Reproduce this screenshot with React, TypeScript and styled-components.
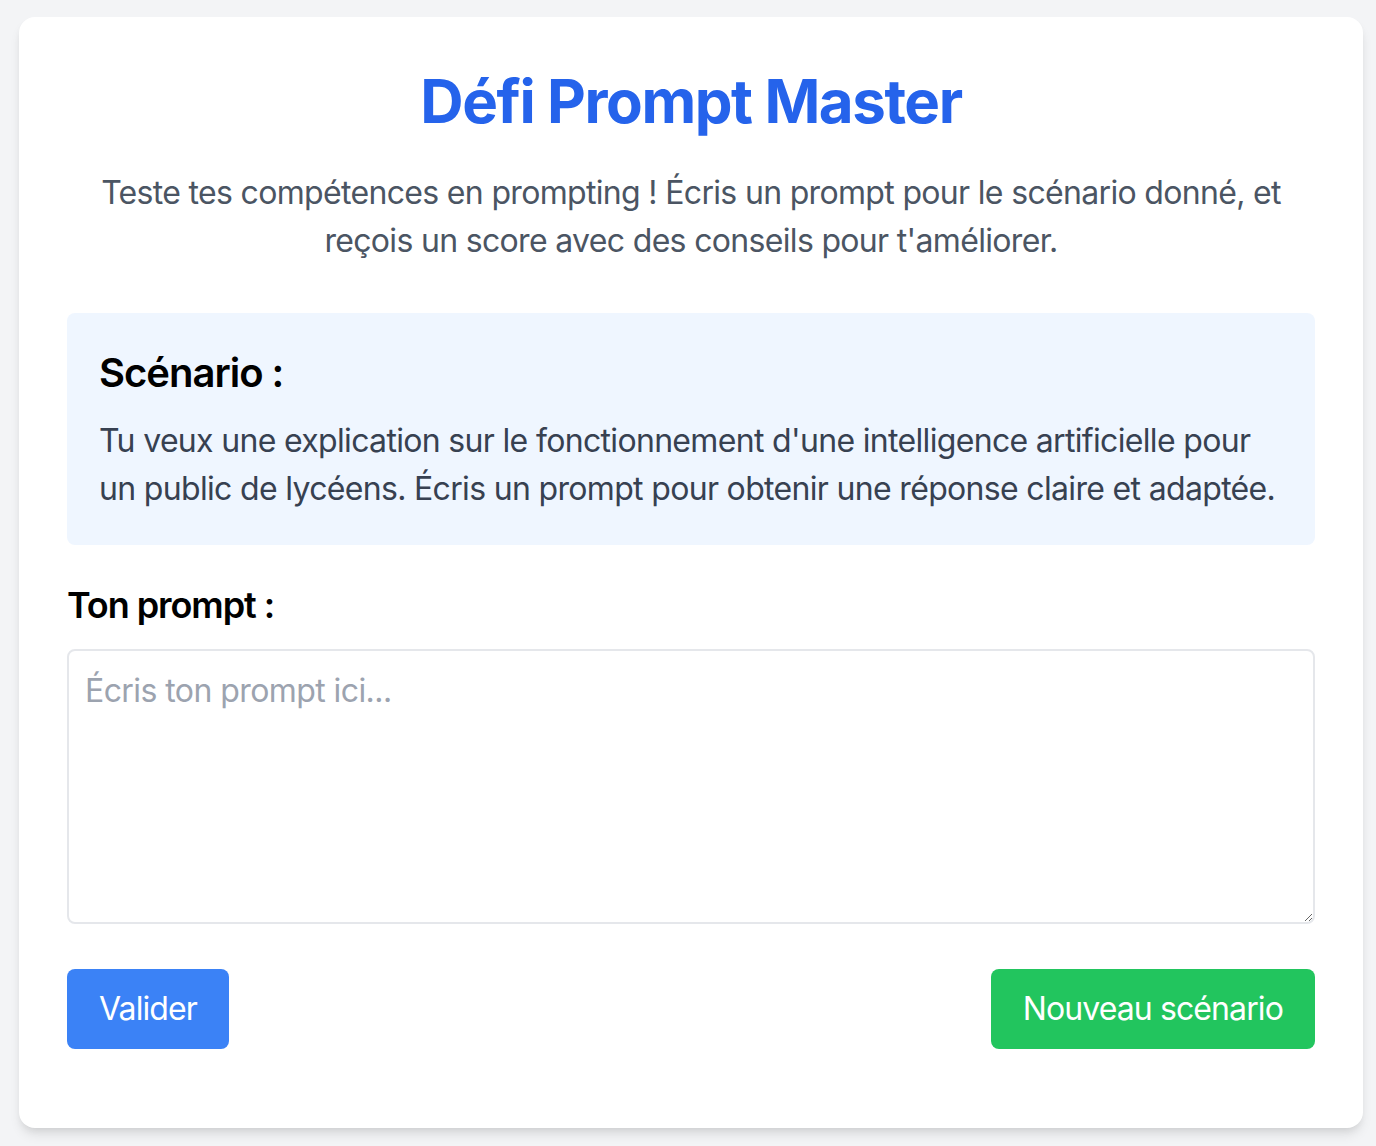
import React from 'react';
import styled, { createGlobalStyle } from 'styled-components';

const GlobalStyle = createGlobalStyle`
    html, body {
        margin: 0;
        padding: 0;
        background: #f3f4f6;
        font-family: Inter, "Noto Sans", "Liberation Sans", sans-serif;
    }
    * {
        box-sizing: border-box;
    }
`;

const Page = styled.div`
    min-height: 1146px;
    padding: 17px 13px 18px 19px;
`;

const Card = styled.main`
    width: 1344px;
    background: #ffffff;
    border-radius: 16px;
    box-shadow: 0 8px 12px -2px rgba(0, 0, 0, 0.1), 0 4px 8px -4px rgba(0, 0, 0, 0.1);
    padding: 48px 48px 79px;
`;

const Title = styled.h1`
    margin: 0 0 32px;
    text-align: center;
    font-size: 60px;
    line-height: 72px;
    font-weight: 700;
    letter-spacing: -0.024em;
    color: #2563eb;
`;

const Intro = styled.p`
    margin: 0 0 48px;
    text-align: center;
    font-size: 32px;
    line-height: 48px;
    letter-spacing: -0.021em;
    color: #4b5563;
`;

const ScenarioBox = styled.section`
    background: #eff6ff;
    border-radius: 8px;
    padding: 32px;
    margin-bottom: 32px;
`;

const ScenarioTitle = styled.h2`
    margin: 0 0 16px;
    font-size: 40px;
    line-height: 56px;
    font-weight: 600;
    letter-spacing: -0.025em;
    color: #000000;
`;

const ScenarioText = styled.p`
    margin: 0;
    font-size: 32px;
    line-height: 48px;
    letter-spacing: -0.021em;
    color: #374151;
`;

const Label = styled.label`
    display: block;
    margin-bottom: 16px;
    font-size: 36px;
    line-height: 56px;
    font-weight: 600;
    letter-spacing: -0.03em;
    color: #000000;
`;

const PromptInput = styled.textarea`
    display: block;
    width: 100%;
    height: 275px;
    padding: 16px;
    border: 2px solid #e5e7eb;
    border-radius: 8px;
    font-family: inherit;
    font-size: 32px;
    line-height: 48px;
    letter-spacing: -0.018em;
    color: #111827;
    resize: vertical;
    outline: none;
    &::placeholder {
        color: #9ca3af;
    }
`;

const Actions = styled.div`
    display: flex;
    justify-content: space-between;
    margin-top: 45px;
`;

const Button = styled.button<{ $tone: 'blue' | 'green' }>`
    height: 80px;
    padding: 0 32px;
    border: none;
    border-radius: 8px;
    background: ${(p) => (p.$tone === 'blue' ? '#3b82f6' : '#22c55e')};
    color: #ffffff;
    font-family: inherit;
    font-size: 32px;
    line-height: 48px;
    letter-spacing: -0.028em;
    cursor: pointer;
`;

export default function App() {
    return (
        <>
            <GlobalStyle />
            <Page>
                <Card>
                    <Title>Défi Prompt Master</Title>
                    <Intro>
                        Teste tes compétences en prompting ! Écris un prompt pour le scénario donné, et reçois un score avec des conseils pour t'améliorer.
                    </Intro>
                    <ScenarioBox>
                        <ScenarioTitle>Scénario :</ScenarioTitle>
                        <ScenarioText>
                            Tu veux une explication sur le fonctionnement d'une intelligence artificielle pour un public de lycéens. Écris un prompt pour obtenir une réponse claire et adaptée.
                        </ScenarioText>
                    </ScenarioBox>
                    <Label htmlFor="prompt">Ton prompt :</Label>
                    <PromptInput id="prompt" placeholder="Écris ton prompt ici..." />
                    <Actions>
                        <Button $tone="blue">Valider</Button>
                        <Button $tone="green">Nouveau scénario</Button>
                    </Actions>
                </Card>
            </Page>
        </>
    );
}
